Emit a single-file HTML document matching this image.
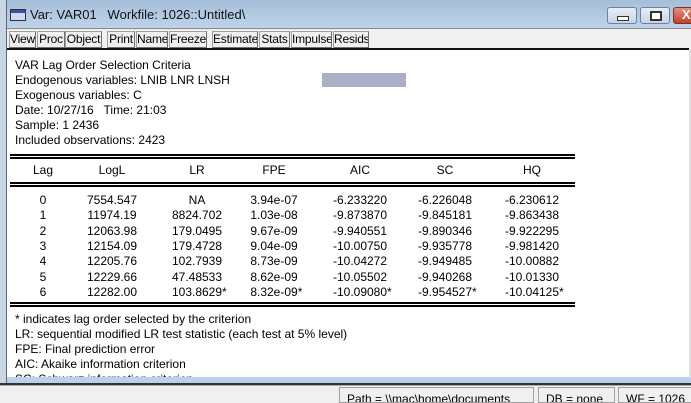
<!DOCTYPE html><html><head><style>
body{margin:0;width:691px;height:402px;overflow:hidden;position:relative;font-family:"Liberation Sans",Arial,sans-serif;background:#c9d6e4}
.a{position:absolute}
#win{left:6px;top:0;width:690px;height:384px;border-left:1px solid #5a6b80;background:linear-gradient(#a5bed9,#bdd3ea 28px,#f0f0f0 28px)}
.tb{position:absolute;top:31px;height:15px;border:1px solid #a0a0a0;border-right-color:#707070;border-bottom-color:#707070;background:#f0f0f0;font-size:12px;line-height:15px;text-align:center;color:#000;overflow:hidden;white-space:nowrap;letter-spacing:-0.2px}
#content{left:7px;top:48px;width:682px;height:329px;background:#fff;border-top:2px solid #111}
.t{position:absolute;font-size:12px;color:#000;white-space:nowrap;line-height:14px}
.c{position:absolute;font-size:12px;white-space:nowrap;transform:translateX(-50%);line-height:14px}
.dl{position:absolute;left:10px;width:565px;border-top:2px solid #000;border-bottom:2px solid #000;height:1px}
.wb{position:absolute;top:7px;height:15px;border:1px solid #6f8099;border-radius:3px;background:linear-gradient(#e8eef6,#c7d4e4)}
.sb{position:absolute;top:387px;height:16px;border:1px solid #a0a0a0;font-size:12px;line-height:23px;background:#f0f0f0;overflow:hidden;padding-left:7px;box-sizing:border-box;white-space:nowrap}
</style></head><body>
<div class="a" id="win"></div>
<div class="a" style="left:10px;top:9px;width:14px;height:10px;border:1px solid #333;background:linear-gradient(#3d4fa8 3px,#cfd6f0 3px)"></div>
<div class="t" style="left:30px;top:7px;font-size:13px;line-height:16px;color:#111">Var: VAR01 &nbsp;&nbsp;Workfile: 1026::Untitled\</div>
<div class="wb" style="left:607px;width:28px"><div class="a" style="left:9px;top:8px;width:10px;height:3px;border:1px solid #333;background:#fff"></div></div>
<div class="wb" style="left:640px;width:28px"><div class="a" style="left:9px;top:3px;width:8px;height:6px;border:2px solid #333;background:#fff"></div></div>
<div class="wb" style="left:673px;width:30px;background:linear-gradient(#e09080,#c5402c);border-color:#803020"><div class="a" style="left:8px;top:-1px;color:#fff;font-weight:bold;font-size:13px">X</div></div>
<div class="a" style="left:7px;top:28px;width:684px;height:1px;background:#888"></div>
<div class="tb" style="left:9px;width:25px">View</div>
<div class="tb" style="left:37px;width:26px">Proc</div>
<div class="tb" style="left:65px;width:35px">Object</div>
<div class="tb" style="left:107px;width:26px">Print</div>
<div class="tb" style="left:136px;width:30px">Name</div>
<div class="tb" style="left:169px;width:36px">Freeze</div>
<div class="tb" style="left:212px;width:44px">Estimate</div>
<div class="tb" style="left:259px;width:29px">Stats</div>
<div class="tb" style="left:291px;width:39px">Impulse</div>
<div class="tb" style="left:333px;width:34px">Resids</div>
<div class="a" id="content"></div>
<div class="a" style="left:689px;top:50px;width:2px;height:327px;background:#e0e0e0"></div>
<div class="a" style="left:322px;top:73px;width:84px;height:14px;background:#aab0c8"></div>
<div class="t" style="left:15px;top:58px">VAR Lag Order Selection Criteria</div>
<div class="t" style="left:15px;top:73px">Endogenous variables: LNIB LNR LNSH</div>
<div class="t" style="left:15px;top:88px">Exogenous variables: C</div>
<div class="t" style="left:15px;top:103px">Date: 10/27/16 &nbsp; Time: 21:03</div>
<div class="t" style="left:15px;top:118px">Sample: 1 2436</div>
<div class="t" style="left:15px;top:133px">Included observations: 2423</div>
<div class="dl" style="top:154px"></div>
<div class="dl" style="top:182px"></div>
<div class="dl" style="top:302px"></div>
<div id="rows"></div>
<div class="t" style="left:15px;top:312px">* indicates lag order selected by the criterion</div>
<div class="t" style="left:15px;top:327px">LR: sequential modified LR test statistic (each test at 5% level)</div>
<div class="t" style="left:15px;top:342px">FPE: Final prediction error</div>
<div class="t" style="left:15px;top:357px">AIC: Akaike information criterion</div>
<div class="t" style="left:15px;top:372px;height:5px;overflow:hidden">SC: Schwarz information criterion</div>
<div class="a" style="left:7px;top:377px;width:684px;height:6px;background:#b9d1ea"></div>
<div class="a" style="left:0;top:383px;width:691px;height:2px;background:#333"></div>
<div class="a" style="left:0;top:385px;width:691px;height:17px;background:#f0f0f0;border-top:1px solid #aaa"></div>
<div class="sb" style="left:339px;width:195px">Path = \\mac\home\documents</div>
<div class="sb" style="left:538px;width:77px">DB = none</div>
<div class="sb" style="left:618px;width:80px">WF = 1026</div>
<script>
var cx=[43,112,197,274,360,445,532];
var h=["Lag","LogL","LR","FPE","AIC","SC","HQ"];
var d=[["0","7554.547","NA","3.94e-07","-6.233220","-6.226048","-6.230612"],
["1","11974.19","8824.702","1.03e-08","-9.873870","-9.845181","-9.863438"],
["2","12063.98","179.0495","9.67e-09","-9.940551","-9.890346","-9.922295"],
["3","12154.09","179.4728","9.04e-09","-10.00750","-9.935778","-9.981420"],
["4","12205.76","102.7939","8.73e-09","-10.04272","-9.949485","-10.00882"],
["5","12229.66","47.48533","8.62e-09","-10.05502","-9.940268","-10.01330"],
["6","12282.00","103.8629*","8.32e-09*","-10.09080*","-9.954527*","-10.04125*"]];
var s="";
h.forEach(function(t,i){s+='<div class="c" style="left:'+cx[i]+'px;top:163px">'+t+'</div>'});
d.forEach(function(r,j){var y=193+j*15.3;r.forEach(function(t,i){var st="";if(t.slice(-1)=="*"){t=t.slice(0,-1);st='<span style="position:absolute;left:100%">*</span>'}s+='<div class="c" style="left:'+cx[i]+'px;top:'+y+'px">'+t+st+'</div>'})});
document.getElementById("rows").innerHTML=s;
</script>
</body></html>
